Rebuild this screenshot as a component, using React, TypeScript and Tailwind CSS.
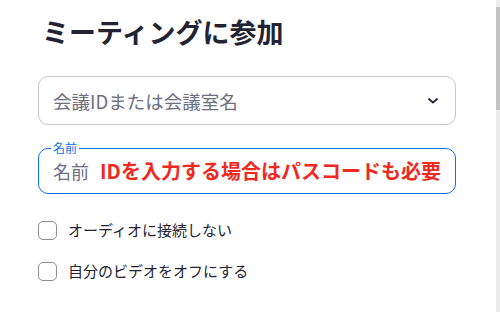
import React from 'react';

const FONT = { fontFamily: '"Noto Sans CJK JP", "Noto Sans", sans-serif' };

function Checkbox({ label }: { label: string }) {
  return (
    <label className="flex h-[20px] items-center gap-[11px]">
      <span className="h-[19px] w-[19px] shrink-0 rounded-[5px] border border-[#8e8e96] bg-white" />
      <span className="text-[15px] leading-[20px] text-[#232333]">{label}</span>
    </label>
  );
}

export default function App() {
  return (
    <div className="flex h-[312px] w-[500px] overflow-hidden bg-white" style={FONT}>
      <div className="flex-1 pl-[38px] pr-[40px]">
        <h1 className="pl-[4px] pt-[14px] text-[27px] font-bold leading-[35px] text-[#232333]">
          ミーティングに参加
        </h1>

        {/* meeting id select */}
        <div className="mt-[27px] flex h-[49px] items-center justify-between rounded-[10px] border border-[#c6c6d2] pl-[14px] pr-[17px]">
          <span className="text-[18.5px] leading-[24px] text-[#6e6e7e]">会議IDまたは会議室名</span>
          <svg width="10" height="6" viewBox="0 0 10 6" fill="none">
            <path d="M1 1l4 3.6L9 1" stroke="#232333" strokeWidth="1.8" strokeLinecap="round" strokeLinejoin="round" />
          </svg>
        </div>

        {/* name input, focused */}
        <div className="relative mt-[23px] flex h-[46px] items-center rounded-[10px] border border-[#0e71eb] pl-[14px]">
          <span className="absolute -top-[8px] left-[12px] bg-white px-[2px] text-[12px] leading-[14px] text-[#0e71eb]">
            名前
          </span>
          <span className="text-[18px] leading-[24px] text-[#6e6e7e]">名前</span>
          <span className="ml-[11px] text-[20px] font-bold leading-[24px] text-[#ee2a1f]">
            IDを入力する場合はパスコードも必要
          </span>
        </div>

        <div className="mt-[26px] flex flex-col gap-[21px]">
          <Checkbox label="オーディオに接続しない" />
          <Checkbox label="自分のビデオをオフにする" />
        </div>
      </div>

      {/* scrollbar */}
      <div className="w-[4px] shrink-0 bg-[#ececec]">
        <div className="mt-[7px] h-[103px] bg-[#c4c4c4]" />
      </div>
    </div>
  );
}
